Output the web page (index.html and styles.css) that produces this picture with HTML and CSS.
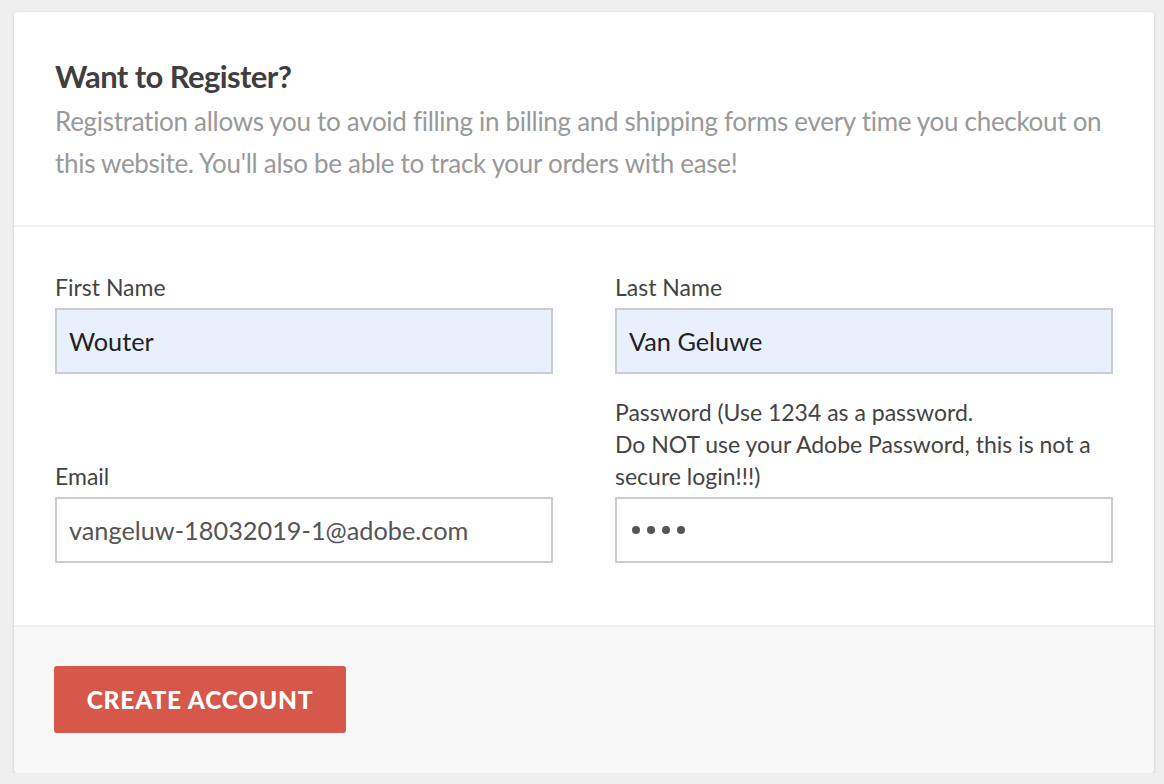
FILE: index.html
```html
<!DOCTYPE html>
<html lang="en">
<head>
<meta charset="utf-8">
<title>Want to Register?</title>
<link rel="stylesheet" href="styles.css">
</head>
<body>
<div class="card">
  <div class="card-header">
    <h2 class="title">Want to Register?</h2>
    <p class="intro">Registration allows you to avoid filling in billing and shipping forms every time you checkout on this website. You'll also be able to track your orders with ease!</p>
  </div>
  <div class="card-body">
    <div class="field">
      <label class="label">First Name</label>
      <div class="input autofill">Wouter</div>
    </div>
    <div class="field">
      <label class="label">Last Name</label>
      <div class="input autofill">Van Geluwe</div>
    </div>
    <div class="field">
      <label class="label">Email</label>
      <div class="input">vangeluw-18032019-1@adobe.com</div>
    </div>
    <div class="field">
      <label class="label">Password (Use 1234 as a password.<br>Do NOT use your Adobe Password, this is not a secure login!!!)</label>
      <div class="input password"><span class="dot"></span><span class="dot"></span><span class="dot"></span><span class="dot"></span></div>
    </div>
  </div>
  <div class="card-footer">
    <button class="btn">CREATE ACCOUNT</button>
  </div>
</div>
</body>
</html>
```
FILE: styles.css
```css
html, body {
  margin: 0;
  padding: 0;
  background: #efefef;
  font-family: Lato, "Open Sans", sans-serif;
}

.card {
  margin: 12px 0 0 14px;
  width: 1140px;
  background: #fff;
  border-radius: 4px;
  box-shadow: 0 1px 3px rgba(0, 0, 0, 0.18);
  overflow: hidden;
}

.card-header {
  padding: 44px 41px 41px;
  border-bottom: 2px solid #efefef;
}

.title {
  margin: 0;
  font-size: 31px;
  line-height: 40px;
  font-weight: 700;
  color: #3f3f3f;
  letter-spacing: -0.6px;
}

.intro {
  margin: 4px 0 0;
  font-size: 26px;
  line-height: 42px;
  color: #999;
  letter-spacing: -0.3px;
}

.card-body {
  display: grid;
  grid-template-columns: 498px 498px;
  column-gap: 62px;
  row-gap: 22px;
  align-items: end;
  padding: 44px 41px 62px;
}

.field {
  display: flex;
  flex-direction: column;
}

.label {
  font-size: 23px;
  line-height: 32px;
  color: #444;
  margin-bottom: 5px;
}

.input {
  box-sizing: border-box;
  height: 66px;
  border: 2px solid #ccc;
  padding: 0 12px;
  display: flex;
  align-items: center;
  font-size: 25.3px;
  color: #222;
  background: #fff;
}

.input.autofill {
  background: #e8f0fe;
}

.input:not(.autofill) {
  color: #555;
}

.password {
  gap: 7px;
  padding-left: 15px;
}

.dot {
  width: 8px;
  height: 8px;
  border-radius: 50%;
  background: #555;
}

.card-footer {
  background: #f8f8f8;
  border-top: 2px solid #efefef;
  padding: 39px 40px 40px;
}

.btn {
  display: block;
  width: 292px;
  height: 67px;
  background: #d5584a;
  color: #fff;
  border: none;
  border-radius: 3px;
  font-family: Lato, sans-serif;
  font-weight: 900;
  font-size: 24.5px;
  letter-spacing: 0.8px;
  cursor: pointer;
}
```
